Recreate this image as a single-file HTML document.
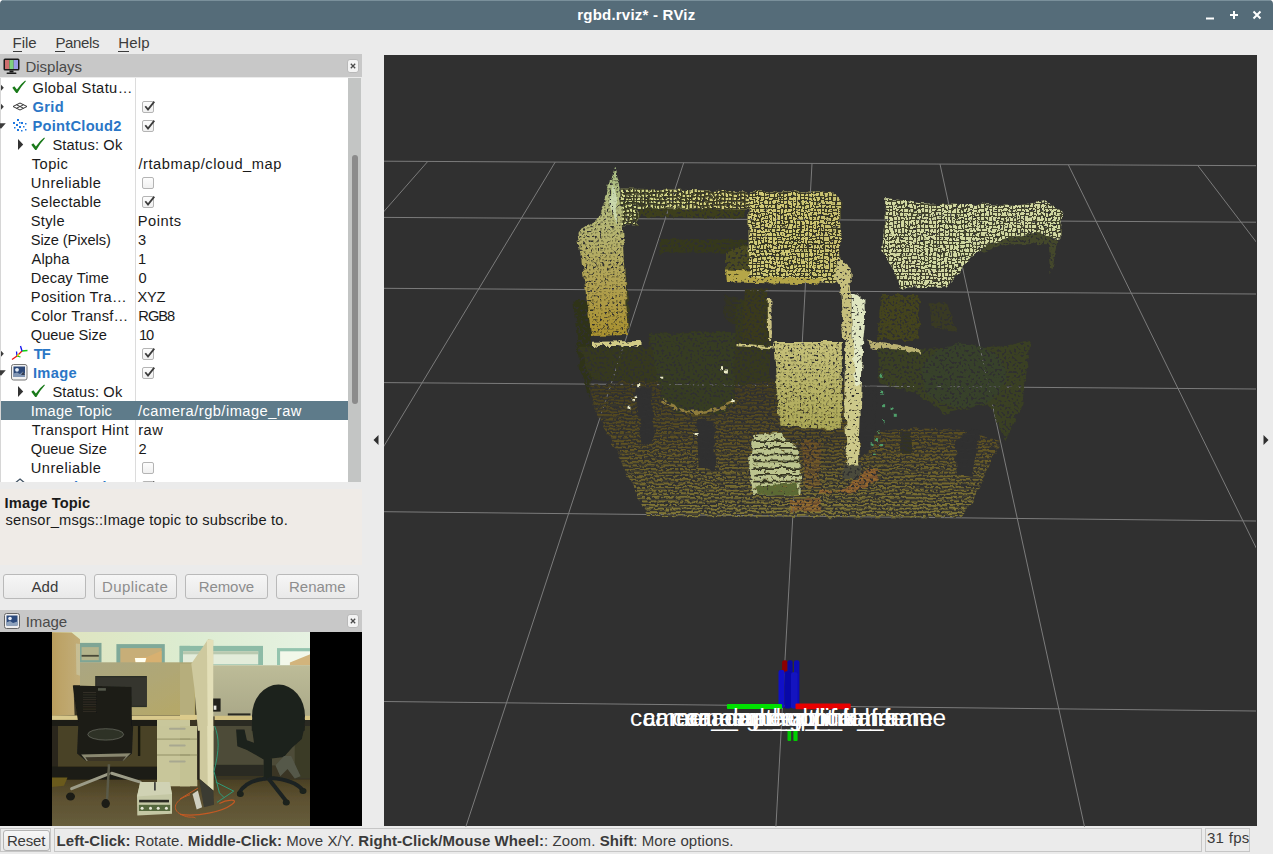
<!DOCTYPE html>
<html><head><meta charset="utf-8"><title>rgbd.rviz* - RViz</title>
<style>
html,body{margin:0;padding:0}
body{width:1273px;height:854px;overflow:hidden;background:#ebebeb;position:relative;font-family:"Liberation Sans",sans-serif;font-size:14.67px;color:#1a1a1a}
.abs{position:absolute}
.t{position:absolute;white-space:nowrap;line-height:19px;height:19px}
.row .t{margin-top:1px}
#titlebar{left:0;top:0;width:1273px;height:30px;background:#556c79;border-radius:4px 4px 0 0}
#title{left:0;width:1273px;top:5px;text-align:center;color:#fff;font-weight:bold;font-size:15px;line-height:19px}
#menubar{left:0;top:30px;width:1273px;height:24px;background:#ebebeb}
.menu{top:33px;font-size:15px;color:#3c3c3c}
u{text-decoration:none;border-bottom:1px solid #3c3c3c}
.phead{left:0;width:362px;background:#c8c8c8;color:#4a4a4a}
.closeb{width:10px;height:12px;border:1px solid #b5b5b5;border-radius:3px;background:#f1f1f1}
#tree{left:0;top:78px;width:348px;height:404px;background:#fff;overflow:hidden}
.row{position:absolute;left:0;width:348px;height:19px}
.sel{background:#5e7b8a;color:#fff;left:1px;width:347px}
.sel .t{margin-left:-1px}
.b{font-weight:bold;color:#2a76c6}
.cb{position:absolute;left:142px;width:10px;height:10px;border:1px solid #b4b4b4;border-radius:2px;background:linear-gradient(#fdfdfd,#f0f0f0)}
.btn{top:574px;width:81px;height:23px;border:1px solid #b9b9b9;border-radius:3px;background:linear-gradient(#f6f6f6,#e9e9e9);text-align:center;line-height:23px;font-size:15px;color:#8d8d8d}
</style></head><body>
<div class="abs" style="left:0;top:0;width:1273px;height:6px;background:#fff"></div>
<div class="abs" id="titlebar"></div>
<div class="abs" style="left:3px;top:0;width:1267px;height:1px;background:#7a909b"></div>
<div class="t " style="left:577.20px;top:5px;letter-spacing:0.225px;font-size:15.0px;font-weight:bold;color:#fff">rgbd.rviz* - RViz</div>
<svg class="abs" style="left:1195px;top:5px" width="78" height="20" viewBox="0 0 78 20">
<g stroke="#fff" stroke-width="2" fill="none"><path d="M11 13.5h8"/><path d="M35 10h8M39 6v8"/><path d="M58.500 6.500l7 7M65.500 6.500l-7 7"/></g></svg>
<div class="abs" id="menubar"></div>
<div class="t " style="left:12.50px;top:33px;letter-spacing:0.000px;font-size:15.0px;color:#3c3c3c"><u>F</u>ile</div>
<div class="t " style="left:55.40px;top:33px;letter-spacing:-0.360px;font-size:15.0px;color:#3c3c3c"><u>P</u>anels</div>
<div class="t " style="left:118.30px;top:33px;letter-spacing:0.133px;font-size:15.0px;color:#3c3c3c"><u>H</u>elp</div>

<!-- Displays panel -->
<div class="abs phead" style="top:54px;height:23px"></div>
<svg class="abs" style="left:3px;top:58px" width="18" height="17" viewBox="0 0 18 17"><rect x="0.500" y="0.500" width="16" height="12" rx="1.500" fill="#1a1a1a"/><rect x="2" y="2" width="4.400" height="9" fill="#cf6f6f"/><rect x="6.400" y="2" width="4.300" height="9" fill="#7fcf7f"/><rect x="10.700" y="2" width="4.300" height="9" fill="#9a9ae6"/><path d="M6.500 12.500h4v2h-4z" fill="#1a1a1a"/><rect x="3.500" y="14.500" width="10" height="1.600" rx="0.800" fill="#1a1a1a"/></svg>
<div class="t " style="left:25.40px;top:57px;letter-spacing:0.000px;font-size:15.0px;color:#4a4a4a">Displays</div>
<svg class="abs" style="left:347px;top:59px" width="12" height="14" viewBox="0 0 12 14"><rect x="0.500" y="0.500" width="11" height="13" rx="2.500" fill="#f3f3f3" stroke="#b9b9b9"/><path d="M3.800 4.800 L8.200 9.200 M8.200 4.800 L3.800 9.200" stroke="#4a4a4a" stroke-width="1.300" fill="none"/></svg>
<div class="abs" id="tree">
<div class="abs" style="left:135px;top:0;width:1px;height:405px;background:#dcdcdc"></div><div class="abs" style="left:0;top:0;width:1px;height:405px;background:#d6d6d6"></div>
<div class="row" style="top:0px"><svg class="abs" style="left:0px;top:0px" width="8" height="19"><path d="M1 6.700 L3.800 9.700 L1 12.700z" fill="#3c3c3c"/></svg><svg class="abs" style="left:12px;top:2px" width="16" height="14" viewBox="0 0 16 14"><path d="M0.300 7.700 L2.300 6.200 L4.900 9.400 Q8.500 4 13.200 0.500 L13.900 1.200 Q9 6.500 5.400 12.900 L4.200 12.900 Z" fill="#1a7a1a"/></svg><div class="t " style="left:32.40px;top:0px;letter-spacing:0.383px;font-size:14.67px;">Global Statu…</div></div>
<div class="row" style="top:19px"><svg class="abs" style="left:0px;top:0px" width="8" height="19"><path d="M1 6.700 L3.800 9.700 L1 12.700z" fill="#3c3c3c"/></svg><svg class="abs" style="left:12px;top:2px" width="16" height="16" viewBox="0 0 16 16"><g fill="none" stroke="#333" stroke-width="1"><path d="M1 7.500 L8 4 L15 7.500 L8 11 Z"/><path d="M4.500 5.750 L11.500 9.250 M11.500 5.750 L4.500 9.250"/></g></svg><div class="t b" style="left:32.40px;top:0px;letter-spacing:0.400px;font-size:14.67px;font-weight:bold;">Grid</div><div class="cb" style="top:4px"></div><svg class="abs" style="left:143px;top:3px" width="13" height="13" viewBox="0 0 13 13"><path d="M2.300 6.300 L5 9.600 L11.300 1.600" fill="none" stroke="#3c3c3c" stroke-width="1.800"/></svg></div>
<div class="row" style="top:38px"><svg class="abs" style="left:0px;top:0px" width="8" height="19"><path d="M0 7.200 H5.800 L1 12.800 L0 12z" fill="#3c3c3c"/></svg><svg class="abs" style="left:12px;top:2px" width="16" height="16" viewBox="0 0 16 16"><g fill="#1f78e0"><rect x="5" y="1" width="2" height="2"/><rect x="1" y="4" width="2" height="2"/><rect x="9" y="4" width="2" height="2"/><rect x="13" y="5" width="1.500" height="1.500"/><rect x="4" y="6" width="2" height="2"/><rect x="7" y="8" width="2" height="2"/><rect x="11" y="8" width="1.500" height="1.500"/><rect x="2" y="9" width="1.500" height="1.500"/><rect x="5" y="11" width="2" height="2"/><rect x="9" y="12" width="1.500" height="1.500"/><rect x="13" y="11" width="1.500" height="1.500"/><rect x="7" y="4" width="1.500" height="1.500"/></g></svg><div class="t b" style="left:32.40px;top:0px;letter-spacing:0.280px;font-size:14.67px;font-weight:bold;">PointCloud2</div><div class="cb" style="top:4px"></div><svg class="abs" style="left:143px;top:3px" width="13" height="13" viewBox="0 0 13 13"><path d="M2.300 6.300 L5 9.600 L11.300 1.600" fill="none" stroke="#3c3c3c" stroke-width="1.800"/></svg></div>
<div class="row" style="top:57px"><svg class="abs" style="left:17px;top:3px" width="8" height="14"><path d="M1 1 L6.200 6.500 L1 12z" fill="#333"/></svg><svg class="abs" style="left:31px;top:2px" width="16" height="14" viewBox="0 0 16 14"><path d="M0.300 7.700 L2.300 6.200 L4.900 9.400 Q8.500 4 13.200 0.500 L13.900 1.200 Q9 6.500 5.400 12.900 L4.200 12.900 Z" fill="#1a7a1a"/></svg><div class="t " style="left:52.40px;top:0px;letter-spacing:0.156px;font-size:14.67px;">Status: Ok</div></div>
<div class="row" style="top:76px"><div class="t " style="left:31.80px;top:0px;letter-spacing:0.450px;font-size:14.67px;">Topic</div><div class="t " style="left:138.40px;top:0px;letter-spacing:0.553px;font-size:14.67px;">/rtabmap/cloud_map</div></div>
<div class="row" style="top:95px"><div class="t " style="left:30.80px;top:0px;letter-spacing:0.467px;font-size:14.67px;">Unreliable</div><div class="cb" style="top:4px"></div></div>
<div class="row" style="top:114px"><div class="t " style="left:30.50px;top:0px;letter-spacing:0.244px;font-size:14.67px;">Selectable</div><div class="cb" style="top:4px"></div><svg class="abs" style="left:143px;top:3px" width="13" height="13" viewBox="0 0 13 13"><path d="M2.300 6.300 L5 9.600 L11.300 1.600" fill="none" stroke="#3c3c3c" stroke-width="1.800"/></svg></div>
<div class="row" style="top:133px"><div class="t " style="left:30.80px;top:0px;letter-spacing:0.300px;font-size:14.67px;">Style</div><div class="t " style="left:137.80px;top:0px;letter-spacing:0.520px;font-size:14.67px;">Points</div></div>
<div class="row" style="top:152px"><div class="t " style="left:30.80px;top:0px;letter-spacing:-0.117px;font-size:14.67px;">Size (Pixels)</div><div class="t " style="left:138px;top:0px;">3</div></div>
<div class="row" style="top:171px"><div class="t " style="left:31.60px;top:0px;letter-spacing:0.100px;font-size:14.67px;">Alpha</div><div class="t " style="left:138px;top:0px;">1</div></div>
<div class="row" style="top:190px"><div class="t " style="left:30.80px;top:0px;letter-spacing:0.089px;font-size:14.67px;">Decay Time</div><div class="t " style="left:138.5px;top:0px;">0</div></div>
<div class="row" style="top:209px"><div class="t " style="left:30.80px;top:0px;letter-spacing:0.317px;font-size:14.67px;">Position Tra…</div><div class="t " style="left:137.60px;top:0px;letter-spacing:-0.300px;font-size:14.67px;">XYZ</div></div>
<div class="row" style="top:228px"><div class="t " style="left:30.80px;top:0px;letter-spacing:0.250px;font-size:14.67px;">Color Transf…</div><div class="t " style="left:138.30px;top:0px;letter-spacing:-1.000px;font-size:14.67px;">RGB8</div></div>
<div class="row" style="top:247px"><div class="t " style="left:30.80px;top:0px;letter-spacing:-0.044px;font-size:14.67px;">Queue Size</div><div class="t " style="left:139.00px;top:0px;letter-spacing:-1.200px;font-size:14.67px;">10</div></div>
<div class="row" style="top:266px"><svg class="abs" style="left:0px;top:0px" width="8" height="19"><path d="M1 6.700 L3.800 9.700 L1 12.700z" fill="#3c3c3c"/></svg><svg class="abs" style="left:11px;top:1px" width="18" height="16" viewBox="0 0 18 16"><g fill="none" stroke-width="1.300"><path d="M6 11 L1 14.500" stroke="#e11"/><path d="M6 11 L9.500 12" stroke="#1c1"/><path d="M6 11 L5.500 6.500" stroke="#11e"/><path d="M11 6 L6 11" stroke="#e11"/><path d="M11 6 L16.500 5.500" stroke="#1c1"/><path d="M11 6 L9.500 1" stroke="#11e"/><path d="M6 11l2-2" stroke="#dd0" stroke-width="1.500"/></g></svg><div class="t b" style="left:33.70px;top:0px;letter-spacing:-1.000px;font-size:14.67px;font-weight:bold;">TF</div><div class="cb" style="top:4px"></div><svg class="abs" style="left:143px;top:3px" width="13" height="13" viewBox="0 0 13 13"><path d="M2.300 6.300 L5 9.600 L11.300 1.600" fill="none" stroke="#3c3c3c" stroke-width="1.800"/></svg></div>
<div class="row" style="top:285px"><svg class="abs" style="left:0px;top:0px" width="8" height="19"><path d="M0 7.200 H5.800 L1 12.800 L0 12z" fill="#3c3c3c"/></svg><svg class="abs" style="left:11px;top:1px" width="17" height="17" viewBox="0 0 17 17"><rect x="0.500" y="0.500" width="15.500" height="15.500" rx="2" fill="#f2f2f2" stroke="#777"/><rect x="2.500" y="2.500" width="11.500" height="10.500" fill="#2c4878"/><path d="M2.500 9.500 L6 8.500 L9 10 L12 7.500 L14 10 V13 H2.500Z" fill="#8196b4"/><path d="M10 11 L12.300 7.500 L14 11Z" fill="#333c50"/><circle cx="6" cy="5.800" r="1.900" fill="#e4ecf6"/></svg><div class="t b" style="left:32.90px;top:0px;letter-spacing:0.350px;font-size:14.67px;font-weight:bold;">Image</div><div class="cb" style="top:4px"></div><svg class="abs" style="left:143px;top:3px" width="13" height="13" viewBox="0 0 13 13"><path d="M2.300 6.300 L5 9.600 L11.300 1.600" fill="none" stroke="#3c3c3c" stroke-width="1.800"/></svg></div>
<div class="row" style="top:304px"><svg class="abs" style="left:17px;top:3px" width="8" height="14"><path d="M1 1 L6.200 6.500 L1 12z" fill="#333"/></svg><svg class="abs" style="left:31px;top:2px" width="16" height="14" viewBox="0 0 16 14"><path d="M0.300 7.700 L2.300 6.200 L4.900 9.400 Q8.500 4 13.200 0.500 L13.900 1.200 Q9 6.500 5.400 12.900 L4.200 12.900 Z" fill="#1a7a1a"/></svg><div class="t " style="left:52.40px;top:0px;letter-spacing:0.156px;font-size:14.67px;">Status: Ok</div></div>
<div class="row sel" style="top:323px"><div class="t " style="left:30.80px;top:0px;letter-spacing:0.240px;font-size:14.67px;">Image Topic</div><div class="t " style="left:138.00px;top:0px;letter-spacing:0.470px;font-size:14.67px;">/camera/rgb/image_raw</div></div>
<div class="row" style="top:342px"><div class="t " style="left:31.80px;top:0px;letter-spacing:0.338px;font-size:14.67px;">Transport Hint</div><div class="t " style="left:138.30px;top:0px;letter-spacing:0.400px;font-size:14.67px;">raw</div></div>
<div class="row" style="top:361px"><div class="t " style="left:30.80px;top:0px;letter-spacing:-0.044px;font-size:14.67px;">Queue Size</div><div class="t " style="left:138.5px;top:0px;">2</div></div>
<div class="row" style="top:380px"><div class="t " style="left:30.80px;top:0px;letter-spacing:0.467px;font-size:14.67px;">Unreliable</div><div class="cb" style="top:4px"></div></div>
<div class="row" style="top:399px"><svg class="abs" style="left:12px;top:1px" width="16" height="16" viewBox="0 0 16 16"><path d="M8 1 L14 6 L8 11 L2 6Z" fill="none" stroke="#456" stroke-width="1.300"/></svg><div class="t b" style="left:32.50px;top:0px;letter-spacing:0.429px;font-size:14.67px;font-weight:bold;">MapCloud</div><div class="cb" style="top:4px"></div><svg class="abs" style="left:143px;top:3px" width="13" height="13" viewBox="0 0 13 13"><path d="M2.300 6.300 L5 9.600 L11.300 1.600" fill="none" stroke="#3c3c3c" stroke-width="1.800"/></svg></div>
</div>
<div class="abs" style="left:348px;top:78px;width:13px;height:404px;background:#c3c5c4"></div>
<div class="abs" style="left:352px;top:155px;width:6px;height:249px;border-radius:3px;background:#8b8b8b"></div>
<div class="abs" style="left:0;top:489px;width:362px;height:76px;background:#efebe7"></div>
<div class="t " style="left:4.60px;top:494px;letter-spacing:0.120px;font-size:14.67px;font-weight:bold;">Image Topic</div>
<div class="t " style="left:5.60px;top:511px;letter-spacing:0.190px;font-size:14.67px;">sensor_msgs::Image topic to subscribe to.</div>
<div class="abs btn" style="left:3px"></div><div class="t " style="left:31.40px;top:577px;letter-spacing:0.100px;font-size:15.0px;color:#3a3a3a">Add</div>
<div class="abs btn" style="left:94px"></div><div class="t " style="left:102.00px;top:577px;letter-spacing:0.400px;font-size:15.0px;color:#8d8d8d">Duplicate</div>
<div class="abs btn" style="left:185px"></div><div class="t " style="left:198.70px;top:577px;letter-spacing:-0.080px;font-size:15.0px;color:#8d8d8d">Remove</div>
<div class="abs btn" style="left:276px"></div><div class="t " style="left:289.00px;top:577px;letter-spacing:0.000px;font-size:15.0px;color:#8d8d8d">Rename</div>

<!-- Image panel -->
<div class="abs phead" style="top:610px;height:22px"></div>
<svg class="abs" style="left:4px;top:613px" width="16" height="16" viewBox="0 0 16 16"><rect x="0.500" y="0.500" width="15" height="15" rx="2" fill="#eee" stroke="#666"/><rect x="2.500" y="2.500" width="11" height="10" fill="#2c4a7c"/><path d="M2.500 9.500 L6 8 L9 10 L13.500 8.500 V12.500 H2.500Z" fill="#8fa3bd"/><circle cx="6" cy="5.500" r="1.800" fill="#e8eef8"/></svg>
<div class="t " style="left:25.70px;top:612px;letter-spacing:-0.100px;font-size:15.0px;color:#4a4a4a">Image</div>
<svg class="abs" style="left:347px;top:614px" width="12" height="14" viewBox="0 0 12 14"><rect x="0.500" y="0.500" width="11" height="13" rx="2.500" fill="#f3f3f3" stroke="#b9b9b9"/><path d="M3.800 4.800 L8.200 9.200 M8.200 4.800 L3.800 9.200" stroke="#4a4a4a" stroke-width="1.300" fill="none"/></svg>
<div class="abs" style="left:0;top:632px;width:362px;height:194px;background:#000"></div>
<svg class="abs" style="left:52px;top:632px" width="258" height="194" viewBox="52 632 258 194">
<defs>
<filter id="cb" x="-5%" y="-5%" width="110%" height="110%"><feGaussianBlur stdDeviation="0.550"/></filter>
<linearGradient id="cw" x1="0" y1="0" x2="1" y2="0"><stop offset="0" stop-color="#dfe3bd"/><stop offset="0.500" stop-color="#dcecd0"/><stop offset="1" stop-color="#e6f2e2"/></linearGradient>
<linearGradient id="cl" x1="0" y1="0" x2="1" y2="1"><stop offset="0" stop-color="#aaa682"/><stop offset="1" stop-color="#b6a866"/></linearGradient>
<linearGradient id="cr" x1="0" y1="0" x2="0" y2="1"><stop offset="0" stop-color="#bdbc98"/><stop offset="1" stop-color="#aaa888"/></linearGradient>
<linearGradient id="cf" x1="0" y1="0" x2="0" y2="1"><stop offset="0" stop-color="#4a4024"/><stop offset="0.300" stop-color="#5c5030"/><stop offset="1" stop-color="#6c6442"/></linearGradient>
<linearGradient id="cbx" x1="0" y1="0" x2="1" y2="0"><stop offset="0" stop-color="#b99d5c"/><stop offset="0.350" stop-color="#bda469"/><stop offset="1" stop-color="#c2ad78"/></linearGradient>
</defs>
<rect x="52" y="632" width="258" height="194" fill="#3a3524"/>
<g filter="url(#cb)">
<rect x="50" y="630" width="262" height="40" fill="url(#cw)"/>
<rect x="80.0" y="642.9" width="21.5" height="19.7" fill="#7fa595" />
<rect x="81.6" y="647.1" width="17.2" height="13.1" fill="#b4b48c" />
<rect x="81.6" y="654.9" width="17.2" height="1.8" fill="#4a4a38" />
<rect x="116.4" y="644.1" width="48.4" height="19.7" fill="#7fa999" />
<rect x="120.3" y="648.1" width="41.3" height="15.8" fill="#c7ae78" />
<polygon points="134.4,657.9 147.5,656.7 161.6,650.7 161.6,663.8 135.5,663.8" fill="#d8b070" />
<polygon points="134.9,658.1 146.3,657.9 145.1,662.6 135.5,662.6" fill="#fffff0" />
<rect x="179.5" y="645.9" width="10.5" height="17.9" fill="#84ad9c" />
<rect x="182.7" y="650.7" width="7.3" height="13.1" fill="#dfe6cf" />
<rect x="180.0" y="645.9" width="83.0" height="19.1" fill="#8dbba6" />
<rect x="183.0" y="651.3" width="75.2" height="13.1" fill="#e3ecda" />
<rect x="183.0" y="651.3" width="75.2" height="3.0" fill="#b9c9b0" />
<rect x="277.0" y="648.1" width="33.2" height="17.0" fill="#94c4ae" />
<rect x="280.1" y="651.3" width="30.1" height="13.7" fill="#f2f8ea" />
<polygon points="289.9,662.6 310.2,654.3 310.2,665.6 289.9,665.6" fill="#d2b47c" />
<rect x="80.0" y="662.3" width="115.3" height="52.9" fill="url(#cl)" />
<rect x="212.2" y="665.3" width="97.9" height="51.1" fill="url(#cr)" />
<rect x="180.0" y="663.8" width="14.3" height="51.4" fill="#b6ae7c" />
<polygon points="51.6,632.2 71.6,632.5 80.0,639.3 80.0,685.3 73.4,685.3 74.6,715.2 51.6,715.8" fill="url(#cbx)" />
<polygon points="75.8,643.5 80.0,644.1 80.0,675.8 76.4,674.6" fill="#c9c9a8" opacity="0.600"/>
<rect x="95.2" y="676.0" width="51.7" height="31.1" fill="#2c2d26" />
<rect x="96.1" y="677.2" width="49.9" height="28.4" fill="#34352d" />
<rect x="51.6" y="715.5" width="143.7" height="4.4" fill="#d9c98c" />
<rect x="180.0" y="714.9" width="17.3" height="4.8" fill="#dccb8c" />
<rect x="214.6" y="715.8" width="95.5" height="4.2" fill="#d5c484" />
<rect x="227.8" y="713.4" width="22.7" height="2.0" fill="#2a2a24" />
<rect x="51.6" y="720.0" width="106.1" height="10.7" fill="#1f1d14" />
<rect x="51.6" y="726.0" width="106.1" height="41.2" fill="#4a4228" />
<rect x="51.6" y="726.0" width="6.3" height="41.2" fill="#2a261a" />
<rect x="51.6" y="766.6" width="106.1" height="13.7" fill="#1c1a12" />
<rect x="214.6" y="720.0" width="95.5" height="10.7" fill="#2b2b20" />
<rect x="213.4" y="726.0" width="96.7" height="39.4" fill="#4d4c38" />
<rect x="213.4" y="764.8" width="50.2" height="11.3" fill="#2a2a20" />
<rect x="294.7" y="726.0" width="15.5" height="52.5" fill="#3a3a28" />
<rect x="50" y="779.7" width="262" height="60" fill="url(#cf)"/>
<polygon points="51.6,777.4 67.5,777.4 63.9,785.7 51.6,786.9" fill="#6b5a1c" />
<rect x="157.0" y="720.0" width="33.0" height="10.7" fill="#c9c79b" />
<rect x="157.0" y="726.0" width="33.0" height="60.3" fill="#c8c69a" />
<rect x="180.0" y="726.0" width="17.3" height="60.3" fill="#c4c294" />
<rect x="157.0" y="738.5" width="33.0" height="1.2" fill="#9c9a70" />
<rect x="157.0" y="754.4" width="33.0" height="1.2" fill="#9c9a70" />
<rect x="180.0" y="738.5" width="17.3" height="1.2" fill="#9c9a70" />
<rect x="180.0" y="754.4" width="17.3" height="1.2" fill="#9c9a70" />
<rect x="169.0" y="727.8" width="16.7" height="2" rx="1" fill="#a8a890"/>
<rect x="169.0" y="744.5" width="16.7" height="2" rx="1" fill="#a8a890"/>
<rect x="169.0" y="760.4" width="16.7" height="2" rx="1" fill="#a8a890"/>
<rect x="197.3" y="726.0" width="2.4" height="53.7" fill="#25241a" />
<polygon points="191.3,663.8 208.1,639.3 213.2,639.9 213.2,730.7 197.9,730.7 194.3,687.7" fill="#cec99e" />
<polygon points="206.9,639.9 213.2,639.9 213.2,730.7 207.7,730.7" fill="#e3dfb8" />
<polygon points="199.7,726.0 213.4,726.0 213.4,790.5 199.7,779.1" fill="#cec99e" />
<polygon points="207.2,726.0 213.4,726.0 213.4,790.5 207.7,785.7" fill="#e3dfb8" />
<polygon points="199.1,778.5 213.4,790.5 214.0,804.8 203.9,807.2" fill="#3a3a30" />
<polygon points="72.8,685.6 131.4,687.1 132.0,730.7 79.4,730.7" fill="#1a1a14" />
<g stroke="#4a4236" stroke-width="0.500">
<path d="M83.0 692.5 H96.1"/>
<path d="M83.0 694.9 H96.1"/>
<path d="M83.0 697.3 H96.1"/>
<path d="M83.0 699.7 H96.1"/>
<path d="M83.0 702.0 H96.1"/>
<path d="M83.0 704.4 H96.1"/>
<path d="M83.0 706.8 H96.1"/>
<path d="M83.0 709.2 H96.1"/>
<path d="M83.0 711.6 H96.1"/>
</g>
<rect x="97.9" y="688.1" width="8.0" height="2.6" fill="#55584a" />
<polygon points="78.2,726.0 133.2,726.0 132.0,753.5 123.6,760.6 85.4,760.6 77.0,753.5" fill="#1e1f18" />
<ellipse cx="105.7" cy="734.4" rx="17.9" ry="5.7" fill="#2f3228" stroke="#85867a" stroke-width="0.500"/>
<polygon points="81.2,754.4 130.8,753.2 123.6,760.6 86.6,760.9" fill="#8a8870" />
<polygon points="85.4,757.3 126.0,756.5 122.4,760.9 87.8,761.1" fill="#3a3428" />
<rect x="137.9" y="726.0" width="2.4" height="29.9" fill="#15150f" />
<g stroke="#9c9c88" stroke-width="3" stroke-linecap="round" fill="none">
<path d="M108.7 773.8 L71.6 788.7"/>
<path d="M111.7 773.2 L140.3 782.1"/>
</g>
<path d="M109.0 764.2 L106.9 802.4" stroke="#5a5a48" stroke-width="2.500"/>
<ellipse cx="70.5" cy="796.5" rx="4.500" ry="4" fill="#1c1c18"/>
<ellipse cx="105.7" cy="803.6" rx="4.200" ry="4.500" fill="#1c1c18"/>
<polygon points="140.3,782.1 169.6,781.9 172.0,794.1 172.0,813.8 137.3,815.6 137.0,796.5" fill="#c4c7a4" />
<polygon points="140.3,782.1 169.6,781.9 172.0,794.1 137.0,796.5" fill="#d0d2b4" />
<rect x="139.1" y="799.8" width="29.9" height="2.6" fill="#2a2c24" />
<rect x="138.9" y="804.8" width="31.3" height="6.2" fill="#55683e" />
<circle cx="142.1" cy="808.2" r="1.500" fill="#e8ead8"/>
<circle cx="150.5" cy="808.2" r="1.500" fill="#e8ead8"/>
<circle cx="158.2" cy="808.2" r="1.500" fill="#e8ead8"/>
<circle cx="166.4" cy="808.2" r="1.500" fill="#e8ead8"/>
<rect x="154.1" y="782.1" width="1.6" height="8.4" fill="#333" />
<path d="M190.0 794.7 C173.8 800.0 171.4 809.6 180.9 814.4 S191.9 815.6 195.5 818.0" stroke="#c45a24" stroke-width="1" fill="none"/>
<path d="M180.0 814.4 C197.9 816.8 221.8 812.0 231.4 804.8 S225.4 800.0 219.4 803.6" stroke="#c45a24" stroke-width="1.200" fill="none"/>
<path d="M180.0 798.9 L197.9 788.1" stroke="#c45a24" stroke-width="1" fill="none"/>
<path d="M214.6 726.0 C219.4 737.9 219.4 749.9 214.0 771.4 L219.4 792.9 L224.2 797.7" stroke="#2f9a78" stroke-width="1" fill="none"/>
<path d="M215.8 782.1 L233.7 791.1 L217.0 802.4" stroke="#2f9a78" stroke-width="1" fill="none"/>
<rect x="213.2" y="698.5" width="7.4" height="13.1" fill="#22221c" />
<rect x="213.7" y="705.6" width="2.7" height="4.2" fill="#e8e8e0" />
<polygon points="192.5,794.1 197.9,790.5 202.1,807.2 196.7,809.6" fill="#cfcfc0" />
<ellipse cx="278.500" cy="716" rx="26.500" ry="31.500" fill="#1f231e"/>
<polygon points="251.7,730.7 252.3,718.8 304.8,718.8 304.8,730.7" fill="#1f231e" />
<polygon points="251.7,726.0 304.8,726.0 301.8,739.1 292.3,747.5 283.9,757.1 263.6,759.4 246.9,749.9 237.3,746.3 236.1,729.6 244.5,729.6 246.9,740.3 254.0,742.7" fill="#1d211c" />
<rect x="263.6" y="758.2" width="8.4" height="20.3" fill="#1e221e" />
<g stroke="#1e2420" stroke-width="4" stroke-linecap="round" fill="none">
<path d="M267.2 778.5 Q246.9 779.7 239.1 792.9"/>
<path d="M268.4 778.5 L286.3 801.2"/>
<path d="M270.8 778.0 Q294.7 779.7 303.0 790.5"/>
</g>
<ellipse cx="240.3" cy="794.1" rx="3.500" ry="3" fill="#1c201c"/>
<ellipse cx="286.3" cy="802.4" rx="3.500" ry="3" fill="#1c201c"/>
<ellipse cx="303.0" cy="791.1" rx="3.500" ry="3" fill="#1c201c"/>
<polygon points="275.5,765.4 283.9,755.9 291.1,755.9 300.6,776.2 294.7,778.5 287.5,769.0 280.3,776.2" fill="#55584a" />
</g>
</svg>

<!-- 3D view -->
<div class="abs" style="left:384px;top:55px;width:873px;height:771px;background:#303030"></div>
<svg class="abs" style="left:384px;top:55px" width="872" height="772" viewBox="384 55 872 772">
<defs>
<pattern id="pd" width="4" height="4" patternUnits="userSpaceOnUse"><rect x="0" y="0" width="1.600" height="1.600" fill="#2a2a18"/></pattern>
<pattern id="pg" width="4" height="4" patternUnits="userSpaceOnUse"><path d="M0 0.500H4M0.500 0V4" stroke="#2c2c1a" stroke-width="1.100"/></pattern>
<pattern id="pg2" width="4" height="4" patternUnits="userSpaceOnUse"><path d="M0 0.800H4M0.800 0V4" stroke="#2c2c1a" stroke-width="1.700"/></pattern>
<pattern id="pd2" width="3" height="3" patternUnits="userSpaceOnUse"><rect x="0" y="0" width="1.300" height="1.300" fill="#303030"/></pattern>
<pattern id="ps" width="8" height="3.600" patternUnits="userSpaceOnUse"><rect x="0" y="2.100" width="8" height="1.500" fill="#303030"/></pattern>
<linearGradient id="gw" x1="0" y1="0" x2="0" y2="1"><stop offset="0" stop-color="#a9bf86"/><stop offset="0.300" stop-color="#b5b878"/><stop offset="0.700" stop-color="#b0a050"/><stop offset="1" stop-color="#a8902f"/></linearGradient>
<linearGradient id="gf" x1="0" y1="0" x2="0" y2="1"><stop offset="0" stop-color="#443d1c"/><stop offset="0.450" stop-color="#5f5222"/><stop offset="1" stop-color="#857b38"/></linearGradient>
<linearGradient id="gc" x1="0" y1="0" x2="0" y2="1"><stop offset="0" stop-color="#c6c17a"/><stop offset="1" stop-color="#aaa655"/></linearGradient>
<linearGradient id="gs" x1="0" y1="0" x2="1" y2="0"><stop offset="0" stop-color="#cdd48c"/><stop offset="0.500" stop-color="#d2cd7c"/><stop offset="1" stop-color="#cdc470"/></linearGradient>
<filter id="pa" filterUnits="userSpaceOnUse" x="560" y="150" width="520" height="390" color-interpolation-filters="sRGB">
<feTurbulence type="fractalNoise" baseFrequency="0.110" numOctaves="2" seed="3" result="n1"/>
<feDisplacementMap in="SourceGraphic" in2="n1" scale="6" xChannelSelector="R" yChannelSelector="G" result="d"/>
<feTurbulence type="fractalNoise" baseFrequency="0.420" numOctaves="1" seed="7" result="n2"/>
<feColorMatrix in="n2" type="matrix" values="0 0 0 0 0  0 0 0 0 0  0 0 0 0 0  10 0 0 0 -3.600" result="m"/>
<feComposite in="d" in2="m" operator="in"/>
</filter><filter id="pb" filterUnits="userSpaceOnUse" x="560" y="150" width="520" height="390" color-interpolation-filters="sRGB">
<feTurbulence type="fractalNoise" baseFrequency="0.110" numOctaves="2" seed="3" result="n1"/>
<feDisplacementMap in="SourceGraphic" in2="n1" scale="6" xChannelSelector="R" yChannelSelector="G" result="d"/>
<feTurbulence type="fractalNoise" baseFrequency="0.420" numOctaves="1" seed="11" result="n2"/>
<feColorMatrix in="n2" type="matrix" values="0 0 0 0 0  0 0 0 0 0  0 0 0 0 0  10 0 0 0 -2.900" result="m"/>
<feComposite in="d" in2="m" operator="in"/>
</filter></defs>
<g stroke="#8e8e8e" stroke-width="1" fill="none" opacity="0.800">
<path d="M384 161.2 L1256 165.7"/>
<path d="M384 217.4 L1256 222.2"/>
<path d="M384 288.3 L1256 294.0"/>
<path d="M384 382.6 L1256 389.0"/>
<path d="M384 511.7 L1256 521.0"/>
<path d="M384 701.5 L1256 711.0"/>
<path d="M427.8 161.4 L-167.0 840.0"/>
<path d="M555.2 162.1 L146.4 840.0"/>
<path d="M683.7 162.7 L461.5 840.0"/>
<path d="M812.0 163.4 L775.2 840.0"/>
<path d="M940.0 164.1 L1087.4 840.0"/>
<path d="M1068.3 164.7 L1399.4 840.0"/>
<path d="M1197.7 165.4 L1713.2 840.0"/>
</g>
<g filter="url(#pa)">
<polygon points="589,386 640,380 760,380 845,380 862,420 872,432 910,428 963,430 1001,441 988.6,466.5 976,496 961,518 648,516 633.200,487.6 618.500,453.8 597.4,413.8" fill="url(#gf)" />
<polygon points="635.3,388.5 651.2,388.5 654.3,441.2 641.7,445.4" fill="#303030" />
<polygon points="696.5,420.1 713.3,420.1 715.4,470.7 698.6,466.5" fill="#303030" />
<polygon points="900.1,430.6 910.6,430.6 912.7,453.8 900.1,453.8" fill="#34341f" />
<polygon points="954.9,441.2 971.8,428.5 980.2,430.6 971.8,477.0 957.0,474.9" fill="#303030" />
<polygon points="860.1,386.4 876.9,386.4 874.8,445.4 860.1,458.0" fill="#303030" />
<polygon points="589,386 640,380 760,380 845,380 862,420 872,432 910,428 963,430 1001,441 988.6,466.5 976,496 961,518 648,516 633.200,487.6 618.500,453.8 597.4,413.8" fill="url(#ps)" />
<polygon points="789.2,500.2 820.0,498.1 820.0,511.8 791.3,511.2" fill="#a8672c" opacity="0.500"/>
<polygon points="820.0,489.7 851.6,492.8 876.9,480.2 879.0,469.6 868.5,467.5 845.3,488.6 820.0,494.9" fill="#b06a30" opacity="0.550"/>
<polygon points="801.9,439.1 820.0,441.2 820.0,487.6 804.0,487.6" fill="#8a5a28" opacity="0.350"/>
<polygon points="573.3,300.0 591.3,300.0 592.1,345.9 589.7,398.4 579.8,368.9" fill="#2f3318" />
<polygon points="579.8,346.7 648.7,346.7 648.7,332.8 735.6,332.0 733.9,300.0 770.0,300.0 770.0,381.1 735.6,385.2 733.9,404.9 717.5,414.8 676.6,413.1 661.8,398.4 658.5,382.0 591.3,380.3" fill="#36391d" />
<polygon points="579.8,346.7 648.7,346.7 648.7,332.8 735.6,332.0 733.9,300.0 770.0,300.0 770.0,381.1 735.6,385.2 733.9,404.9 717.5,414.8 676.6,413.1 661.8,398.4 658.5,382.0 591.3,380.3" fill="url(#pd2)" opacity="0.500"/>
<polygon points="648.7,332.8 735.6,332.0 733.9,385.2 733.9,404.9 717.5,414.8 676.6,413.1 661.8,398.4 658.5,382.0" fill="#363c22" />
<path d="M661.8 400.0 Q694.6 424.6 733.9 401.6" stroke="#8f7c3c" stroke-width="3" fill="none"/>
<polygon points="637.5,208.1 745.0,208.9 745.0,218.0 637.5,216.9" fill="#3d3f1c" />
<polygon points="658.5,239.0 747.1,239.0 747.1,252.7 658.5,252.7" fill="#35381c" />
<polygon points="726.0,252.7 749.2,244.3 749.2,282.3 726.0,280.2" fill="#4a4a20" />
<polygon points="745.0,289.6 768.1,289.6 769.2,340.0 741.8,340.0" fill="#3a3a1a" />
<polygon points="745.0,289.6 768.1,289.6 769.2,340.0 741.8,340.0" fill="url(#pd2)" opacity="0.500"/>
<polygon points="723.9,294.9 736.5,297.0 736.5,324.4 726.0,322.3" fill="#35361c" opacity="0.700"/>
<polygon points="625.2,265.4 630.1,307.6 628.0,335.0 626.5,318.1" fill="#3a3d1e" />
<polygon points="988.6,244.3 1009.7,238.0 1037.1,231.7 1058.2,241.2 1054.0,261.2 1050.8,273.8 1047.7,244.3 1009.7,244.3 980.2,252.7" fill="#4a4f2a" opacity="0.800"/>
<polygon points="881.1,294.9 919.1,294.9 919.1,340.0 876.9,340.0" fill="#44441c" />
<polygon points="881.1,294.9 919.1,294.9 919.1,340.0 876.9,340.0" fill="url(#pd2)" opacity="0.400"/>
<polygon points="929.6,303.3 946.5,303.3 957.0,330.7 931.7,328.6" fill="#3d3e1e" opacity="0.700"/>
<polygon points="876.9,346.3 925.4,348.4 1003.4,346.3 1030.8,340.0 1022.4,403.2 1005.5,441.2 988.6,403.2 971.8,407.5 946.5,413.8 914.9,392.7 879.0,384.3" fill="#3a4023" />
<ellipse cx="963.3" cy="375.8" rx="42" ry="32" fill="#37412a"/>
<polygon points="843.2,464.4 860.1,464.4 860.1,479.1 843.2,479.1" fill="#4a4a3c" />
</g>
<g filter="url(#pb)">
<polygon points="726.0,269.6 820.0,273.8 820.0,284.4 727.0,282.3" fill="#b5a648" />
<polygon points="620.6,188.5 671.2,189.5 738.6,191.6 820.0,191.6 820.0,278.0 749.2,278.0 748.1,209.5 637.5,208.1 637.9,225.3 621.6,225.3" fill="url(#gs)" />
<polygon points="620.6,188.5 671.2,189.5 748.1,191.6 748.1,209.5 637.5,208.1 637.9,225.3 621.6,225.3" fill="url(#pg2)" opacity="0.900"/>
<polygon points="748.1,191.6 820.0,191.6 820.0,278.0 749.2,278.0" fill="url(#pg)" opacity="0.900"/>
<polygon points="820.0,191.6 834.8,192.7 841.1,202.2 840.0,248.5 841.1,278.0 832.6,284.4 820.0,283.3" fill="#c8c070" />
<polygon points="820.0,191.6 834.8,192.7 841.1,202.2 840.0,248.5 841.1,278.0 832.6,284.4 820.0,283.3" fill="url(#pg)" opacity="0.900"/>
<polygon points="767.7,299.1 771.3,299.1 771.9,340.0 768.1,340.0" fill="#c9c080" />
<polygon points="614.3,167.4 619.5,187.4 622.7,223.2 625.2,265.4 626.9,318.1 628.0,335.0 591.1,336.0 587.9,307.6 582.6,269.6 577.4,231.7 596.3,220.1 604.8,202.2 610.1,179.0" fill="url(#gw)" />
<polygon points="614.3,167.4 619.5,187.4 622.7,223.2 625.2,265.4 626.9,318.1 628.0,335.0 591.1,336.0 587.9,307.6 582.6,269.6 577.4,231.7 596.3,220.1 604.8,202.2 610.1,179.0" fill="url(#pd)" opacity="0.400"/>
<polygon points="613.2,183.2 617.4,202.2 616.8,223.2 612.2,212.7 609.0,202.2" fill="#cfe0b8" opacity="0.800"/>
<polygon points="593.0,341.8 640.5,341.0 640.5,345.9 593.0,345.9" fill="#d2cb86" />
<polygon points="885.3,197.9 900.1,200.1 921.2,203.2 967.6,205.3 988.6,203.2 1018.1,205.3 1045.5,201.1 1062.4,210.6 1060.3,238.0 1056.1,240.1 1037.1,231.7 1009.7,238.0 988.6,244.3 971.8,257.0 954.9,278.0 946.5,286.5 900.1,287.5 893.8,271.7 882.2,250.6 884.3,223.2" fill="#d2d8a2" />
<polygon points="885.3,197.9 900.1,200.1 921.2,203.2 967.6,205.3 988.6,203.2 1018.1,205.3 1045.5,201.1 1062.4,210.6 1060.3,238.0 1056.1,240.1 1037.1,231.7 1009.7,238.0 988.6,244.3 971.8,257.0 954.9,278.0 946.5,286.5 900.1,287.5 893.8,271.7 882.2,250.6 884.3,223.2" fill="url(#pg)" opacity="0.850"/>
<polygon points="868.5,340.0 921.2,348.4 921.2,352.6 870.6,348.4" fill="#b8b070" />
<polygon points="773.4,342.1 841.9,342.1 841.9,430.6 780.8,425.4 777.6,403.2" fill="url(#gc)" />
<polygon points="773.4,342.1 841.9,342.1 841.9,430.6 780.8,425.4 777.6,403.2" fill="url(#pd)" opacity="0.300"/>
<polygon points="736.5,343.2 773.4,346.3 773.4,348.4 736.5,346.3" fill="#cfc880" />
<polygon points="753.4,434.9 780.8,432.7 798.7,449.6 800.8,493.9 753.4,496.0 749.2,466.5" fill="#bcc48e" />
<g stroke="#33331f" stroke-width="1.800">
<path d="M753.4 441.2 H799.8"/>
<path d="M753.4 447.9 H799.8"/>
<path d="M753.4 454.7 H799.8"/>
<path d="M753.4 461.4 H799.8"/>
<path d="M753.4 468.2 H799.8"/>
<path d="M753.4 474.9 H799.8"/>
<path d="M753.4 481.7 H799.8"/>
<path d="M753.4 488.4 H799.8"/>
</g>
<polygon points="755.5,485.4 797.7,483.3 798.7,493.9 756.6,496.0" fill="#5c6a34" />
<polygon points="837.9,257.0 851.6,269.6 851.6,340.0 843.2,340.0 840.0,286.5 834.8,278.0" fill="#c6bf7c" />
<polygon points="851.6,292.8 864.3,299.1 865.3,320.2 863.2,340.0 851.6,340.0" fill="#dfe6c0" />
<polygon points="845.3,340.0 863.2,340.0 861.1,403.2 859.0,464.4 847.4,464.4 844.2,403.2" fill="#cdc98a" />
<polygon points="853.7,340.0 863.2,340.0 861.7,382.2 854.8,386.4" fill="#e2e8c4" />
<g fill="#4f9f6a">
<rect x="880.1" y="373.7" width="3" height="3"/>
<rect x="880.1" y="390.6" width="3" height="3"/>
<rect x="881.1" y="403.2" width="3" height="3"/>
<rect x="890.6" y="407.5" width="3" height="3"/>
<rect x="893.8" y="414.8" width="3" height="3"/>
<rect x="882.2" y="420.1" width="3" height="3"/>
<rect x="878.0" y="430.6" width="3" height="3"/>
<rect x="875.9" y="438.0" width="3" height="3"/>
<rect x="880.1" y="443.3" width="3" height="3"/>
<rect x="873.8" y="452.8" width="3" height="3"/>
<rect x="870.6" y="443.3" width="3" height="3"/>
</g>
<g fill="#ecebc8">
<rect x="637.2" y="385.2" width="3" height="3"/>
<rect x="635.6" y="394.3" width="3" height="3"/>
<rect x="631.5" y="398.4" width="3" height="3"/>
<rect x="627.4" y="405.7" width="3" height="3"/>
<rect x="720.0" y="367.2" width="3" height="3"/>
<rect x="724.9" y="370.5" width="3" height="3"/>
<rect x="660.2" y="375.7" width="3" height="3"/>
<rect x="694.6" y="432.0" width="3" height="3"/>
<rect x="730.7" y="400.0" width="3" height="3"/>
</g>
</g>
<rect x="782.1" y="660.3" width="5.4" height="12.5" rx="2.0" fill="#8c0000"/>
<rect x="787.5" y="660.3" width="5.1" height="46.9" rx="2.0" fill="#0a0aa0"/>
<rect x="794.0" y="660.3" width="5.4" height="46.9" rx="2.0" fill="#0c0cb4"/>
<rect x="778.5" y="669.9" width="6.0" height="38.2" rx="2.0" fill="#1010c8"/>
<rect x="784.5" y="671.3" width="6.6" height="37.3" rx="2.0" fill="#0808a8"/>
<rect x="791.0" y="672.2" width="6.6" height="36.4" rx="2.0" fill="#1414c0"/>
<rect x="726.9" y="703.9" width="55.2" height="5.1" rx="1.0" fill="#00e000"/>
<rect x="795.5" y="703.6" width="55.2" height="5.7" rx="1.0" fill="#e80000"/>
<rect x="787.5" y="729.6" width="3.6" height="11.3" rx="1.0" fill="#00c800"/>
<rect x="793.4" y="729.6" width="4.2" height="11.3" rx="1.0" fill="#00d000"/>
<g font-family="Liberation Sans, sans-serif" font-size="24.400" fill="#fff" text-anchor="middle">
<text x="788.0" y="725.500">camera_depth_optical_frame</text>
<text x="788.0" y="725.500">camera_rgb_optical_frame</text>
<text x="788.5" y="725.500">camera_depth_frame</text>
<text x="789.0" y="725.500">camera_rgb_frame</text>
<text x="790.0" y="725.500">camera_link</text>
</g>
</svg>
<svg class="abs" style="left:371px;top:433px" width="10" height="14"><path d="M7.500 2v10l-5-5z" fill="#2e2e2e"/></svg>
<svg class="abs" style="left:1261px;top:433px" width="10" height="14"><path d="M2.500 2v10l5-5z" fill="#2e2e2e"/></svg>

<!-- status bar -->
<div class="abs" style="left:0px;top:828px;width:51px;height:24px;border:1px solid #c6c6c6;box-sizing:border-box"></div>
<div class="abs" style="left:3px;top:830px;width:45px;height:19px;border:1px solid #b4b4b4;border-radius:3px;background:linear-gradient(#f7f7f7,#e8e8e8)"></div>
<div class="t " style="left:6.90px;top:831px;letter-spacing:-0.150px;font-size:15.0px;color:#3a3a3a">Reset</div>
<div class="abs" style="left:54px;top:828px;width:1148px;height:24px;border:1px solid #c6c6c6;box-sizing:border-box"></div>
<div class="t " style="left:56.50px;top:831px;letter-spacing:0.065px;font-size:15.0px;color:#3a3a3a"><b>Left-Click:</b> Rotate. <b>Middle-Click:</b> Move X/Y. <b>Right-Click/Mouse Wheel:</b>: Zoom. <b>Shift</b>: More options.</div>
<div class="abs" style="left:1205px;top:828px;width:45px;height:24px;border:1px solid #c6c6c6;box-sizing:border-box"></div>
<div class="t " style="left:1206.90px;top:828px;letter-spacing:0.320px;font-size:15.0px;color:#3a3a3a">31 fps</div>
</body></html>
